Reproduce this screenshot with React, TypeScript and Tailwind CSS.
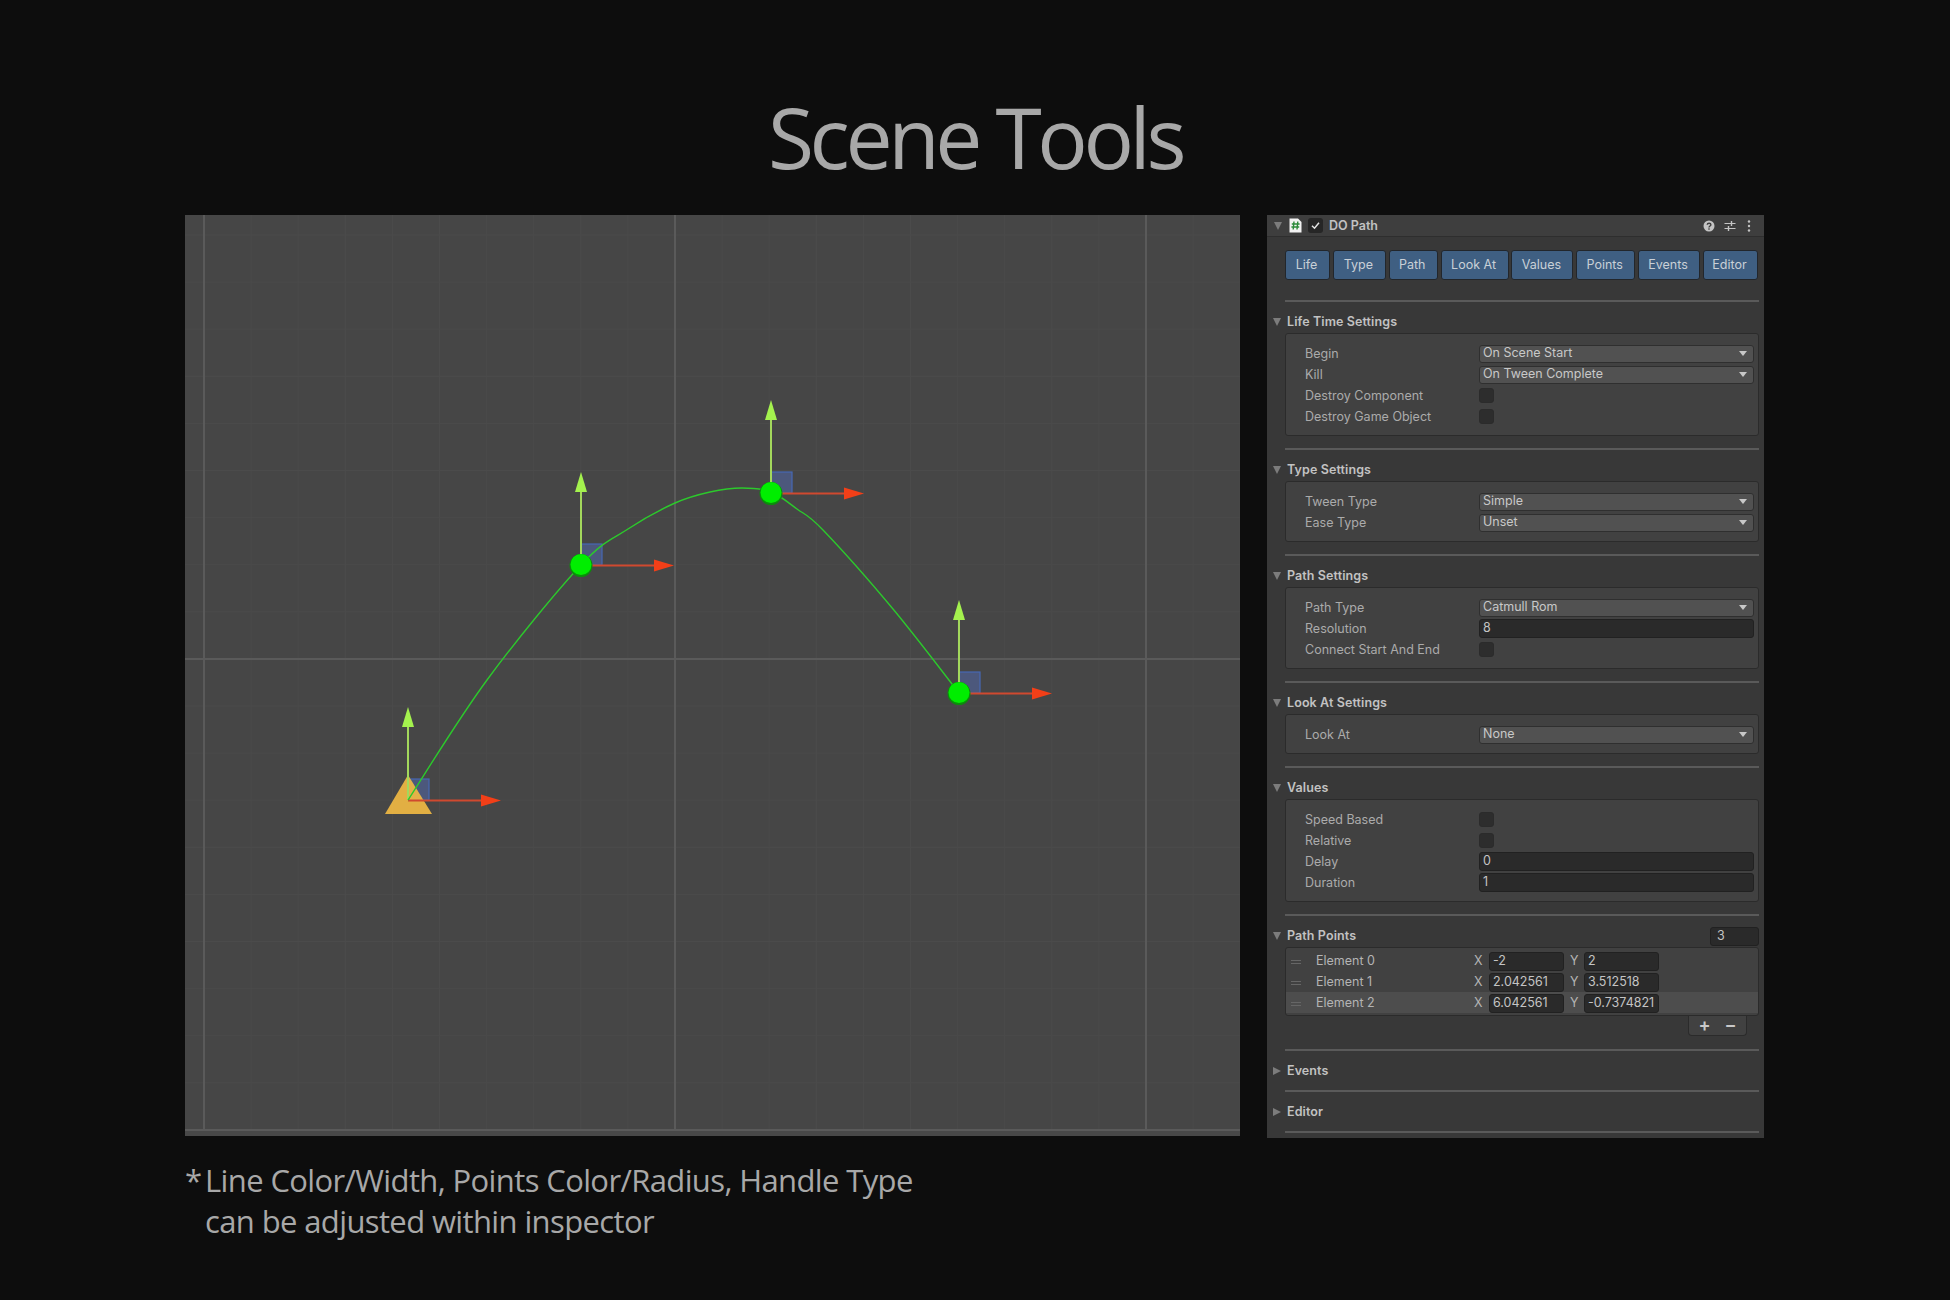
import React from "react";

const uiFont = "font-['Inter','Liberation_Sans',sans-serif]";

type Row =
    | { label: string; kind: "select"; value: string }
    | { label: string; kind: "field"; value: string }
    | { label: string; kind: "check" };

const sections: { title: string; rows: Row[] }[] = [
    {
        title: "Life Time Settings",
        rows: [
            { label: "Begin", kind: "select", value: "On Scene Start" },
            { label: "Kill", kind: "select", value: "On Tween Complete" },
            { label: "Destroy Component", kind: "check" },
            { label: "Destroy Game Object", kind: "check" },
        ],
    },
    {
        title: "Type Settings",
        rows: [
            { label: "Tween Type", kind: "select", value: "Simple" },
            { label: "Ease Type", kind: "select", value: "Unset" },
        ],
    },
    {
        title: "Path Settings",
        rows: [
            { label: "Path Type", kind: "select", value: "Catmull Rom" },
            { label: "Resolution", kind: "field", value: "8" },
            { label: "Connect Start And End", kind: "check" },
        ],
    },
    {
        title: "Look At Settings",
        rows: [{ label: "Look At", kind: "select", value: "None" }],
    },
    {
        title: "Values",
        rows: [
            { label: "Speed Based", kind: "check" },
            { label: "Relative", kind: "check" },
            { label: "Delay", kind: "field", value: "0" },
            { label: "Duration", kind: "field", value: "1" },
        ],
    },
];

const tabs = [
    { name: "Life", w: "w-[45px]" },
    { name: "Type", w: "w-[53px]" },
    { name: "Path", w: "w-[49px]" },
    { name: "Look At", w: "w-[68px]" },
    { name: "Values", w: "w-[62px]" },
    { name: "Points", w: "w-[59px]" },
    { name: "Events", w: "w-[62px]" },
    { name: "Editor", w: "w-[55px]" },
];

const elements = [
    { name: "Element 0", x: "-2", y: "2" },
    { name: "Element 1", x: "2.042561", y: "3.512518" },
    { name: "Element 2", x: "6.042561", y: "-0.7374821" },
];

const curvePoints: [number, number][] = [
    [408, 800], [487, 680], [581, 565], [628, 529], [675, 503], [710, 492], [742, 488],
    [771, 492], [797, 509], [823, 530], [893, 609], [959, 693],
];

// catmull rom through the sampled points
function curvePath(pts: [number, number][]) {
    let d = `M${pts[0][0]} ${pts[0][1]}`;
    for (let i = 0; i < pts.length - 1; i++) {
        const p0 = pts[Math.max(i - 1, 0)];
        const p1 = pts[i];
        const p2 = pts[i + 1];
        const p3 = pts[Math.min(i + 2, pts.length - 1)];
        d += ` C${p1[0] + (p2[0] - p0[0]) / 6} ${p1[1] + (p2[1] - p0[1]) / 6} ${p2[0] - (p3[0] - p1[0]) / 6} ${p2[1] - (p3[1] - p1[1]) / 6} ${p2[0]} ${p2[1]}`;
    }
    return d;
}

function Gizmo({ x, y, children }: { x: number; y: number; children?: React.ReactNode }) {
    return (
        <g>
            <rect x={x + 0.5} y={y - 21} width={20.5} height={21} fill="#4d5c86" fillOpacity={0.85} stroke="#4668b4" strokeWidth={1.2} />
            {children}
            <line x1={x} y1={y} x2={x} y2={y - 75} stroke="#a3d85c" strokeWidth={2} />
            <polygon points={`${x},${y - 93} ${x - 6},${y - 73} ${x + 6},${y - 73}`} fill="#a4f24e" />
            <line x1={x} y1={y + 0.5} x2={x + 76} y2={y + 0.5} stroke="#d0492f" strokeWidth={2} />
            <polygon points={`${x + 93},${y + 0.5} ${x + 73},${y - 5.5} ${x + 73},${y + 6.5}`} fill="#f23f18" />
        </g>
    );
}

function PathPoint({ x, y }: { x: number; y: number }) {
    return (
        <g>
            <circle cx={x} cy={y + 0.5} r={11.5} fill="#0a8f0a" />
            <circle cx={x} cy={y - 0.5} r={10.5} fill="#00ee00" />
        </g>
    );
}

function SceneView() {
    const minorX = Array.from({ length: 23 }, (_, i) => 204 + i * 47.1);
    const minorY = Array.from({ length: 20 }, (_, i) => 235 + i * 47.1);
    return (
        <div className="h-[921px] w-[1055px] bg-[#464646]">
            <svg className="block h-full w-full" viewBox="185 215 1055 921">
                {minorX.map((x) => (
                    <line key={x} x1={x} y1={215} x2={x} y2={1136} stroke="#4b4b4b" strokeWidth={1} />
                ))}
                {minorY.map((y) => (
                    <line key={y} x1={185} y1={y} x2={1240} y2={y} stroke="#4b4b4b" strokeWidth={1} />
                ))}
                {[204, 675, 1146].map((x) => (
                    <line key={x} x1={x} y1={215} x2={x} y2={1136} stroke="#5a5a5a" strokeWidth={2} />
                ))}
                {[659, 1130].map((y) => (
                    <line key={y} x1={185} y1={y} x2={1240} y2={y} stroke="#5a5a5a" strokeWidth={2} />
                ))}
                <rect x={185} y={1131} width={1055} height={5} fill="#484848" />

                <Gizmo x={408} y={800}>
                    <polygon points="408,775 385,814 432,814" fill="#f0b843" fillOpacity={0.92} />
                </Gizmo>
                <Gizmo x={581} y={565} />
                <Gizmo x={771} y={493} />
                <Gizmo x={959} y={693} />
                <path d={curvePath(curvePoints)} fill="none" stroke="#2cc92c" strokeWidth={1.4} />
                <PathPoint x={581} y={565} />
                <PathPoint x={771} y={493} />
                <PathPoint x={959} y={693} />
            </svg>
        </div>
    );
}

function Foldout({ open }: { open: boolean }) {
    return (
        <svg className="h-[10px] w-[10px] shrink-0" viewBox="0 0 10 10">
            {open ? <polygon points="1,1 9,1 5,9" fill="#7c7c7c" /> : <polygon points="1,1 9,5 1,9" fill="#7c7c7c" />}
        </svg>
    );
}

function Separator() {
    return <div className="h-[2px] bg-[#5a5a5a]" />;
}

function Heading({ title, open = true }: { title: string; open?: boolean }) {
    return (
        <div className="-ml-[13px] flex h-[31px] items-center gap-[5px] pt-[9px] text-[12.5px] font-semibold tracking-[0.1px] text-[#c2c2c2]">
            <Foldout open={open} />
            <span>{title}</span>
        </div>
    );
}

function Select({ value }: { value: string }) {
    return (
        <div className="-mt-px flex h-[18px] flex-1 items-center justify-between rounded-[3px] border border-[#2f2f2f] bg-[#515151] pl-[3px] pr-[6px] text-[12.5px] text-[#c8c8c8]">
            <span className="-mt-px">{value}</span>
            <svg className="h-[6px] w-[8px]" viewBox="0 0 8 6">
                <polygon points="0,0 8,0 4,5" fill="#c8c8c8" />
            </svg>
        </div>
    );
}

function Field({ value, className }: { value: string; className?: string }) {
    return (
        <div className={`flex h-[19px] items-center rounded-[3px] border border-[#212121] bg-[#2a2a2a] pl-[3px] text-[12.5px] text-[#c4c4c4] ${className ?? ""}`}>
            {value}
        </div>
    );
}

function SettingRow({ row }: { row: Row }) {
    return (
        <div className="flex h-[21px] items-center">
            <span className="w-[193px] pl-[19px] text-[12.5px] text-[#ababab]">{row.label}</span>
            {row.kind === "select" && <Select value={row.value} />}
            {row.kind === "field" && <Field value={row.value} className="-mt-[2px] flex-1" />}
            {row.kind === "check" && <div className="-mt-[3px] h-[15px] w-[15px] rounded-[3px] border border-[#2b2b2b] bg-[#2d2d2d]" />}
        </div>
    );
}

function Inspector() {
    return (
        <div className={`w-[497px] bg-[#383838] ${uiFont}`}>
            {/* Component header */}
            <div className="flex h-[22px] items-center border-b border-[#2e2e2e] bg-[#3e3e3e] pl-[6px] pr-[13px]">
                <Foldout open />
                <svg className="ml-[6px] h-[15px] w-[13px]" viewBox="0 0 13 15">
                    <path d="M0.5 0.5H9L12.5 4V14.5H0.5Z" fill="#f2f2f2" />
                    <path d="M5 3.5 4.2 11.5M8.8 3.5 8 11.5M2.8 6H10.6M2.4 9H10.2" stroke="#2c8a3a" strokeWidth={1.4} fill="none" />
                </svg>
                <div className="ml-[6px] flex h-[15px] w-[15px] items-center justify-center rounded-[3px] bg-[#262626]">
                    <svg className="h-[11px] w-[11px]" viewBox="0 0 11 11">
                        <path d="M2 5.8 4.5 8.2 9 2.8" fill="none" stroke="#e4e4e4" strokeWidth={1.5} />
                    </svg>
                </div>
                <span className="ml-[6px] flex-1 pt-px text-[12.5px] font-semibold text-[#c2c2c2]">DO Path</span>
                <svg className="h-[12px] w-[12px]" viewBox="0 0 12 12">
                    <circle cx={6} cy={6} r={5.5} fill="#c4c4c4" />
                    <path d="M4.2 4.7C4.3 2.7 7.9 2.7 7.9 4.7 7.9 6 6 6 6 7.4" fill="none" stroke="#3e3e3e" strokeWidth={1.4} />
                    <rect x={5.3} y={8.3} width={1.4} height={1.4} fill="#3e3e3e" />
                </svg>
                <svg className="ml-[9px] h-[12px] w-[12px]" viewBox="0 0 12 12">
                    <path d="M0.5 3.5H11.5M0.5 8.5H11.5" stroke="#c4c4c4" strokeWidth={1.2} />
                    <path d="M7.5 1V6M4.5 6V11" stroke="#c4c4c4" strokeWidth={1.4} />
                </svg>
                <svg className="ml-[11px] h-[12px] w-[4px]" viewBox="0 0 4 12">
                    <circle cx={2} cy={1.5} r={1.2} fill="#c4c4c4" />
                    <circle cx={2} cy={6} r={1.2} fill="#c4c4c4" />
                    <circle cx={2} cy={10.5} r={1.2} fill="#c4c4c4" />
                </svg>
            </div>

            <div className="pb-[5px] pl-[18px] pr-[5px]">
                {/* Tabs */}
                <div className="flex justify-between pb-[20px] pr-[1px] pt-[13px]">
                    {tabs.map((tab) => (
                        <div key={tab.name} className={`flex h-[30px] items-center justify-center rounded-[3px] border border-[#22262b] bg-[#3f5f82] pr-[2px] text-[12.5px] text-[#c9d0d7] ${tab.w}`}>
                            {tab.name}
                        </div>
                    ))}
                </div>

                {sections.map((section) => (
                    <div key={section.title} className="pb-[12px]">
                        <Separator />
                        <Heading title={section.title} />
                        <div className="rounded-[3px] border border-[#2b2b2b] bg-[#414141] pb-[7px] pr-[4px] pt-[10px]">
                            {section.rows.map((row) => (
                                <SettingRow key={row.label} row={row} />
                            ))}
                        </div>
                    </div>
                ))}

                {/* Path points list */}
                <Separator />
                <div className="flex items-center justify-between">
                    <Heading title="Path Points" />
                    <Field value="3" className="mt-[9px] w-[49px] pl-[6px]" />
                </div>
                <div className="rounded-[3px] border border-[#2b2b2b] bg-[#414141] py-[2px]">
                    {elements.map((el, i) => (
                        <div key={el.name} className={`flex h-[21px] items-center pt-[2px] text-[12.5px] text-[#b4b4b4] ${i === 2 ? "bg-[#4d4d4d]" : ""}`}>
                            <div className="ml-[5px] flex w-[25px] flex-col gap-[2px]">
                                <div className="h-px w-[10px] bg-[#666666]" />
                                <div className="h-px w-[10px] bg-[#666666]" />
                            </div>
                            <span className="w-[158px]">{el.name}</span>
                            <span className="w-[15px]">X</span>
                            <Field value={el.x} className="w-[75px]" />
                            <span className="ml-[6px] w-[14px]">Y</span>
                            <Field value={el.y} className="w-[75px]" />
                        </div>
                    ))}
                </div>
                <div className="ml-auto mr-[12px] flex h-[20px] w-[59px] items-center justify-center gap-[14px] rounded-b-[4px] border border-t-0 border-[#2b2b2b] bg-[#414141] pb-[2px] text-[18px] font-semibold text-[#c8c8c8]">
                    <span>+</span>
                    <span>−</span>
                </div>

                <div className="pt-[13px]">
                    <Separator />
                    <div className="pb-[8px]">
                        <Heading title="Events" open={false} />
                    </div>
                    <Separator />
                    <div className="pb-[8px]">
                        <Heading title="Editor" open={false} />
                    </div>
                    <Separator />
                </div>
            </div>
        </div>
    );
}

export default function App() {
    return (
        <div className="h-[1300px] w-full overflow-hidden bg-[#0d0d0d] font-['Open_Sans',sans-serif] text-[#a8a8a8]">
            <h1 className="h-[215px] pt-[84px] text-center text-[84px] font-normal leading-[105px] tracking-[-4.4px]">Scene Tools</h1>
            <div className="flex items-start gap-[27px] pl-[185px]">
                <div className="w-[1055px]">
                    <SceneView />
                    <div className="pt-[24px] text-[31px] leading-[41px] tracking-[-0.62px]">
                        <p className="flex">
                            <span className="w-[20px]">*</span>
                            <span>Line Color/Width, Points Color/Radius, Handle Type</span>
                        </p>
                        <p className="pl-[20px]">can be adjusted within inspector</p>
                    </div>
                </div>
                <Inspector />
            </div>
        </div>
    );
}
